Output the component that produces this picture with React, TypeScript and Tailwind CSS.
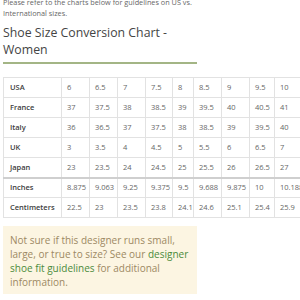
import React from "react";

const rows: { label: string; vals: string[]; thick?: boolean }[] = [
  { label: "USA", vals: ["6", "6.5", "7", "7.5", "8", "8.5", "9", "9.5", "10"] },
  { label: "France", vals: ["37", "37.5", "38", "38.5", "39", "39.5", "40", "40.5", "41"] },
  { label: "Italy", vals: ["36", "36.5", "37", "37.5", "38", "38.5", "39", "39.5", "40"] },
  { label: "UK", vals: ["3", "3.5", "4", "4.5", "5", "5.5", "6", "6.5", "7"] },
  { label: "Japan", vals: ["23", "23.5", "24", "24.5", "25", "25.5", "26", "26.5", "27"] },
  { label: "Inches", vals: ["8.875", "9.063", "9.25", "9.375", "9.5", "9.688", "9.875", "10", "10.188"], thick: true },
  { label: "Centimeters", vals: ["22.5", "23", "23.5", "23.8", "24.1", "24.6", "25.1", "25.4", "25.9"] },
];

const widths = [58, 28, 28, 28, 27, 21, 28, 28, 25, 40];

export default function App() {
  return (
    <div
      className="w-[300px] h-[300px] overflow-hidden bg-white pl-[3px]"
      style={{ fontFamily: '"Open Sans", "Liberation Sans", sans-serif' }}
    >
      <p className="mt-[-3px] text-[7.3px] leading-[11px] text-[#666]">
        Please refer to the charts below for guidelines on US vs.
        <br />
        International sizes.
      </p>
      <div className="mt-[5px] w-[194px] border-b-2 border-[#a3b585] pb-[4px]">
        <h2 className="text-[12.3px] leading-[17px] font-normal text-[#444]">
          Shoe Size Conversion Chart -
          <br />
          Women
        </h2>
      </div>
      <div className="mt-[13px]">
        <table className="table-fixed border-collapse w-[311px] text-[7.5px]">
          <colgroup>
            {widths.map((w, i) => (
              <col key={i} style={{ width: w }} />
            ))}
          </colgroup>
          <tbody>
            {rows.map((r) => (
              <tr
                key={r.label}
                className={r.thick ? "border-t-2 border-t-[#cfcfcf]" : ""}
              >
                <td className="h-[20px] border border-[#e2e2e2] pl-[6px] font-semibold text-[#3d3d3d] whitespace-nowrap">
                  {r.label}
                </td>
                {r.vals.map((v, i) => (
                  <td
                    key={i}
                    className="h-[20px] border border-[#e2e2e2] pl-[5px] text-[#666] whitespace-nowrap overflow-visible"
                  >
                    {v}
                  </td>
                ))}
              </tr>
            ))}
          </tbody>
        </table>
      </div>
      <div className="mt-[8px] w-[194px] bg-[#fcf5e2] pl-[7px] pt-[7px] pb-[5px] text-[10px] leading-[14px] text-[#9d8963] whitespace-nowrap">
        Not sure if this designer runs small,
        <br />
        large, or true to size? See our{" "}
        <span className="text-[#4b8b3b]">designer</span>
        <br />
        <span className="text-[#4b8b3b]">shoe fit guidelines</span> for additional
        <br />
        information.
      </div>
    </div>
  );
}
